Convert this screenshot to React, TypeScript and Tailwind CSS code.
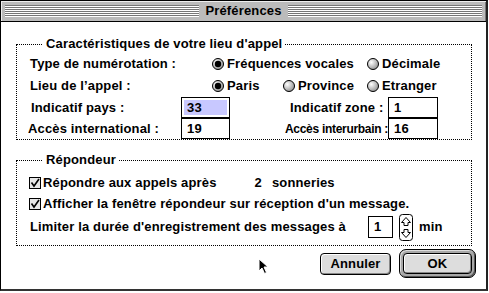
import React from "react";

function Stripes() {
  return (
    <div className="flex-1 h-[12px] bg-[repeating-linear-gradient(to_bottom,#777_0px,#777_1px,#fff_1px,#fff_2px)]" />
  );
}

function Radio({ on }: { on?: boolean }) {
  return (
    <svg width="12" height="12" viewBox="0 0 12 12" className="shrink-0">
      <defs>
        <radialGradient id="rg" cx="35%" cy="35%" r="75%">
          <stop offset="0" stopColor="#fff" />
          <stop offset="1" stopColor="#8a8a8a" />
        </radialGradient>
      </defs>
      <circle cx="6" cy="6" r="5.5" fill="url(#rg)" stroke="#000" />
      {on && <circle cx="6" cy="6" r="3.2" fill="#000" />}
    </svg>
  );
}

function Check() {
  return (
    <svg width="12" height="12" viewBox="0 0 12 12" className="shrink-0">
      <rect x="0.5" y="0.5" width="11" height="11" fill="#e6e6e6" stroke="#000" />
      <path d="M2.5 5.5 L5 9 L10 2" stroke="#000" strokeWidth="1.6" fill="none" />
    </svg>
  );
}

function Stepper() {
  return (
    <svg width="14" height="27" viewBox="0 0 14 27" className="shrink-0">
      <rect x="0.5" y="0.5" width="13" height="26" rx="3" fill="#fff" stroke="#000" />
      <path d="M7 3.5 L11.5 8.5 H9 V11.5 H5 V8.5 H2.5 Z" fill="#fff" stroke="#000" />
      <path d="M7 23.5 L11.5 18.5 H9 V15.5 H5 V18.5 H2.5 Z" fill="#fff" stroke="#000" />
    </svg>
  );
}

function Field({ value, selected, w, h }: { value: string; selected?: boolean; w: string; h: string }) {
  return (
    <div className={`${w} ${h} shrink-0 border border-black bg-white p-[2px] flex`}>
      <div className={`flex-1 flex items-center pl-[3px] ${selected ? "bg-[#c8c8ff]" : ""}`}>{value}</div>
    </div>
  );
}

export default function App() {
  return (
    <div className="w-[489px] h-[293px] bg-white font-['Liberation_Sans',Arial,sans-serif] text-[13px] tracking-[0.15px] font-bold text-black leading-[14px] whitespace-nowrap">
      <div className="relative w-[488px] h-[291px] border-l border-t border-black border-r-2 border-b-2 border-r-[#222] border-b-[#333] flex flex-col">
        {/* Title bar */}
        <div className="h-[21px] shrink-0 bg-[#bbb] border-b border-black flex items-center px-[4px] gap-[4px] shadow-[inset_1px_1px_0_#eee,inset_-1px_0_0_#777]">
          <Stripes />
          <span className="px-[2px]">Préférences</span>
          <Stripes />
        </div>

        <div className="flex-1 flex flex-col pl-[15px] pr-[14px]">
          {/* Group 1 */}
          <fieldset className="mt-[15px] border border-dotted border-black">
            <legend className="ml-[26px] px-[3px] leading-[14px]">Caractéristiques de votre lieu d'appel</legend>
            <div className="flex flex-col pl-[13px] pt-[2px]">
              <div className="h-[22px] flex items-center">
                <span className="w-[182px] shrink-0">Type de numérotation :</span>
                <div className="w-[155px] flex items-center gap-[3px]">
                  <Radio on />
                  <span>Fréquences vocales</span>
                </div>
                <div className="flex items-center gap-[3px]">
                  <Radio />
                  <span>Décimale</span>
                </div>
              </div>
              <div className="h-[22px] flex items-center">
                <span className="w-[182px] shrink-0">Lieu de l’appel :</span>
                <div className="w-[71px] flex items-center gap-[3px]">
                  <Radio on />
                  <span>Paris</span>
                </div>
                <div className="w-[84px] flex items-center gap-[3px]">
                  <Radio />
                  <span>Province</span>
                </div>
                <div className="flex items-center gap-[3px]">
                  <Radio />
                  <span>Etranger</span>
                </div>
              </div>
              <div className="h-[21px] flex items-center">
                <span className="w-[151px] shrink-0 pl-[1px]">Indicatif pays :</span>
                <Field value="33" selected w="w-[49px]" h="h-[21px]" />
                <span className="ml-[60px] w-[98px] shrink-0">Indicatif zone :</span>
                <Field value="1" w="w-[50px]" h="h-[21px]" />
              </div>
              <div className="h-[21px] flex items-center">
                <span className="w-[153px] shrink-0 ml-[-2px]">Accès international :</span>
                <Field value="19" w="w-[49px]" h="h-[21px]" />
                <span className="ml-[55px] w-[103px] shrink-0 text-[12px] tracking-[-0.3px]">Accès interurbain :</span>
                <Field value="16" w="w-[50px]" h="h-[21px]" />
              </div>
            </div>
          </fieldset>

          {/* Group 2 */}
          <fieldset className="mt-[13px] border border-dotted border-black">
            <legend className="ml-[26px] px-[3px] leading-[14px]">Répondeur</legend>
            <div className="flex flex-col pl-[12px] pt-[5px] pb-[4px]">
              <div className="h-[22px] flex items-center gap-[2px]">
                <Check />
                <span>Répondre aux appels après</span>
                <span className="ml-[36px]">2</span>
                <span className="ml-[8px]">sonneries</span>
              </div>
              <div className="h-[19px] flex items-center gap-[2px]">
                <Check />
                <span>Afficher la fenêtre répondeur sur réception d'un message.</span>
              </div>
              <div className="h-[28px] flex items-center pl-[1px]">
                <span>Limiter la durée d'enregistrement des messages à</span>
                <div className="ml-[22px]">
                  <Field value="1" w="w-[25px]" h="h-[22px]" />
                </div>
                <div className="ml-[6px] flex">
                  <Stepper />
                </div>
                <span className="ml-[6px]">min</span>
              </div>
            </div>
          </fieldset>

          {/* Buttons */}
          <div className="mt-[3px] flex items-center justify-end gap-[8px] mr-[-4px]">
            <button className="w-[71px] h-[22px] rounded-[4px] border border-black bg-[#ddd] shadow-[inset_1px_1px_0_#fff,inset_-1px_-1px_0_#888] leading-[14px]">
              Annuler
            </button>
            <div className="w-[77px] h-[29px] rounded-[7px] border border-black bg-[#a8a8a8] p-[3px] shadow-[inset_1px_1px_0_#ddd,inset_-1px_-1px_0_#555]">
              <button className="w-full h-full rounded-[4px] border border-black bg-[#ddd] shadow-[inset_1px_1px_0_#fff,inset_-1px_-1px_0_#888] leading-[14px]">
                OK
              </button>
            </div>
          </div>
        </div>

        {/* Mouse pointer */}
        <svg width="11" height="17" viewBox="0 0 11 17" className="absolute left-[257px] top-[257px]">
          <path d="M1 1 L1 13 L4 10 L6.5 15.5 L8.5 14.5 L6 9 L10 9 Z" fill="#000" stroke="#fff" strokeWidth="1" />
        </svg>
      </div>
    </div>
  );
}
